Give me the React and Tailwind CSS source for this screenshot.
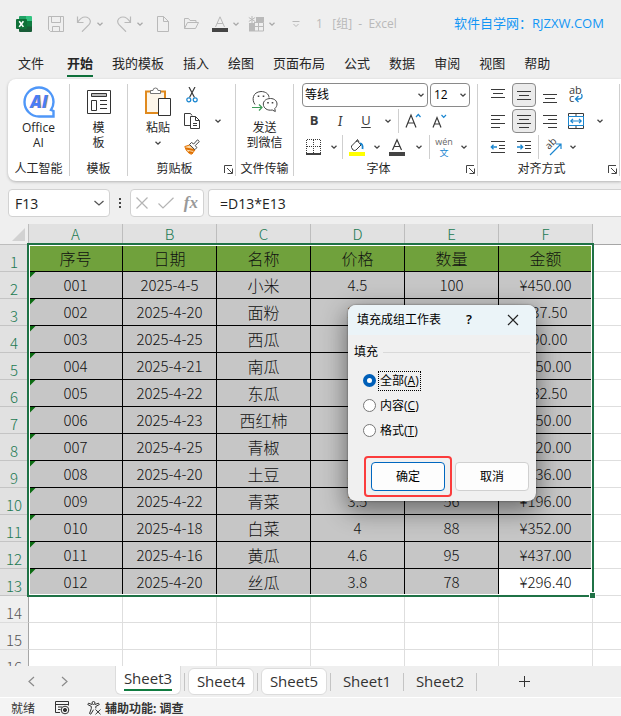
import React, { useState } from 'react';

const menuTabs = ['开始', '我的模板', '插入', '绘图', '页面布局', '公式', '数据', '审阅', '视图', '帮助'];

const columns = ['A', 'B', 'C', 'D', 'E', 'F'];

const headers = ['序号', '日期', '名称', '价格', '数量', '金额'];

const rows = [
  ['001', '2025-4-5', '小米', '4.5', '100', '¥450.00'],
  ['002', '2025-4-20', '面粉', '2.5', '15', '¥37.50'],
  ['003', '2025-4-25', '西瓜', '3', '30', '¥90.00'],
  ['004', '2025-4-21', '南瓜', '5', '50', '¥250.00'],
  ['005', '2025-4-22', '东瓜', '1.5', '55', '¥82.50'],
  ['006', '2025-4-23', '西红柿', '5', '70', '¥350.00'],
  ['007', '2025-4-25', '青椒', '4', '80', '¥320.00'],
  ['008', '2025-4-20', '土豆', '3.2', '105', '¥336.00'],
  ['009', '2025-4-22', '青菜', '3.5', '56', '¥196.00'],
  ['010', '2025-4-18', '白菜', '4', '88', '¥352.00'],
  ['011', '2025-4-16', '黄瓜', '4.6', '95', '¥437.00'],
  ['012', '2025-4-20', '丝瓜', '3.8', '78', '¥296.40'],
];

const emptyRows = [14, 15, 16];

const fillOptions = [
  { id: 'all', label: '全部', key: 'A' },
  { id: 'content', label: '内容', key: 'C' },
  { id: 'format', label: '格式', key: 'T' },
];

const Chevron = ({ className = 'text-[#444]' }) => (
  <svg width="8" height="8" viewBox="0 0 8 8" fill="none" stroke="currentColor" strokeWidth="1.3" className={`shrink-0 ${className}`}>
    <path d="M1.5 2.8 4 5.2l2.5-2.4" />
  </svg>
);

const Launcher = () => (
  <button aria-label="更多选项" className="w-[14px] h-4 flex items-center justify-center text-[#444]">
    <svg width="9" height="9" viewBox="0 0 9 9" fill="none" stroke="currentColor">
      <path d="M.5 8V.5H8M3 3l5 5M8.5 3.5v5h-5" />
    </svg>
  </button>
);

const Divider = () => <div className="w-px shrink-0 my-[5px] bg-[#cfcfcf]" />;

const RowDivider = () => <div className="w-px h-6 shrink-0 bg-[#cfcfcf]" />;

const Tool = ({ label, active, children }) => (
  <button
    aria-label={label}
    className={`w-6 h-6 shrink-0 flex items-center justify-center text-[#3a3a3a] ${active ? 'rounded border border-[#8a8a8a] bg-[#ebebeb]' : ''}`}
  >
    {children}
  </button>
);

const Drop = ({ label, className = 'w-5' }) => (
  <button aria-label={label} className={`h-6 shrink-0 flex items-center justify-center ${className}`}>
    <Chevron />
  </button>
);

const Lines = ({ d }) => (
  <svg width="16" height="18" viewBox="0 0 16 18" fill="none" stroke="currentColor">
    <path d={d} />
  </svg>
);

const Group = ({ label, launcher, className, children }) => (
  <section className={`shrink-0 flex flex-col pt-1 pb-1 ${className}`}>
    <div className="h-[76px]">{children}</div>
    <div className="mt-[2px] h-4 flex items-center">
      <span className="flex-1 text-center leading-4 whitespace-nowrap">{label}</span>
      {launcher && <Launcher />}
    </div>
  </section>
);

const TitleBar = () => (
  <header className="h-[47px] shrink-0 pl-4 flex items-center gap-3 text-[#b9b9b9]">
    <div className="w-5">
      <svg width="16" height="16" viewBox="0 0 16 16">
        <path d="M4 0h6v5H3V1a1 1 0 0 1 1-1z" fill="#21a366" />
        <path d="M10 0h5a1 1 0 0 1 1 1v4h-6z" fill="#33c481" />
        <path d="M3 5h7v6H3z" fill="#107c41" />
        <path d="M10 5h6v6h-6z" fill="#107c41" />
        <path d="M3 10.5h13V15a1 1 0 0 1-1 1H4a1 1 0 0 1-1-1z" fill="#185c37" />
        <rect y="3" width="11" height="10" rx="1" fill="#0f7038" />
        <path d="m3.2 5.2 4.2 5.7M7.400 5.200l-4.200 5.700" stroke="#fff" strokeWidth="1.6" />
      </svg>
    </div>
    <button aria-label="保存">
      <svg width="16" height="16" viewBox="0 0 16 16" fill="none" stroke="currentColor">
        <path d="M.5.5h15v15h-13l-2-2zM3.500.5v6h9v-6M4.500 15.500v-5h7v5" />
      </svg>
    </button>
    <div className="flex items-center gap-1">
      <button aria-label="撤消">
        <svg width="16" height="16" viewBox="0 0 16 16" fill="none" stroke="currentColor" strokeWidth="1.2">
          <path d="M1.500.5v6h6M1.500 6.500C4 2.500 7.500.2 11 1.300c3.500 1.200 4.300 4.800 2 7.400L6 15.700" />
        </svg>
      </button>
      <Chevron className="text-[#a8a8a8]" />
    </div>
    <div className="flex items-center gap-1">
      <button aria-label="恢复">
        <svg width="16" height="16" viewBox="0 0 16 16" fill="none" stroke="currentColor" strokeWidth="1.2">
          <path d="M14.500.5v6h-6M14.500 6.500C12 2.500 8.500.2 5 1.300 1.500 2.500.7 6.100 3 8.700l7 7" />
        </svg>
      </button>
      <Chevron className="text-[#a8a8a8]" />
    </div>
    <button aria-label="新建">
      <svg width="14" height="16" viewBox="0 0 14 16" fill="none" stroke="currentColor">
        <path d="M1.500.5h6l5 5v10h-11zM7.500.5v5h5" />
      </svg>
    </button>
    <button aria-label="打开">
      <svg width="18" height="16" viewBox="0 0 18 16" fill="none" stroke="currentColor">
        <path d="M2.500 12.500v-10h4l1.500 2h6v2M2.500 12.500l3-6h11l-3 6z" />
      </svg>
    </button>
    <div className="flex items-center gap-2">
      <div className="flex items-center gap-1">
        <button aria-label="字体颜色">
          <svg width="16" height="16" viewBox="0 0 16 16" fill="none" stroke="currentColor">
            <path d="M3.500 11 8 .8 12.500 11M5 7.500h6" />
            <path d="M0 14h16" stroke="#444" strokeWidth="4" />
          </svg>
        </button>
        <Chevron className="text-[#a8a8a8]" />
      </div>
      <div className="flex items-center gap-1">
        <button aria-label="套用格式">
          <svg width="16" height="16" viewBox="0 0 16 16" fill="none" stroke="currentColor">
            <path d="M4 0v7M.8 1.500l6.400 4M7.200 1.500.8 5.500" />
            <path d="M8 1h8v5H8zM1 7h5v8H1z" fill="currentColor" stroke="none" />
            <path d="M6 6.500h9.500v8.500H1M10.500 6.500V15M1 10.500h14.500M6.500 6.500V15" />
          </svg>
        </button>
        <Chevron className="text-[#a8a8a8]" />
      </div>
    </div>
    <button aria-label="自定义" className="w-4 flex justify-center">
      <svg width="8" height="8" viewBox="0 0 8 8" fill="none" stroke="currentColor">
        <path d="M.5 1.500h7M1.500 4 4 6.500 6.500 4" />
      </svg>
    </button>
    <span className="w-[126px] shrink-0 text-[12px] whitespace-pre">{'1   [组]  -  Excel'}</span>
    <a href="#" className="text-[13px] text-[#1296f5] whitespace-nowrap">软件自学网：RJZXW.COM</a>
  </header>
);

const MenuBar = () => (
  <nav className="h-8 shrink-0 pl-[18px] flex gap-[19px] text-[13px] leading-[20px] pt-[6px] text-[#262626] whitespace-nowrap">
    <button className="mr-1 h-6 flex">文件</button>
    {menuTabs.map((tab) => (
      <button
        key={tab}
        className={`h-6 flex ${tab === '开始' ? 'font-bold border-b-2 border-[#0f703b]' : ''}`}
      >
        {tab}
      </button>
    ))}
  </nav>
);

const BigButton = ({ icon, lines }) => (
  <button className="w-full flex flex-col items-center leading-[15px]">
    <span className="h-[37px] flex items-center">{icon}</span>
    {lines.map((line, i) => (
      <span key={i} className="h-[15px] flex items-center">{line}</span>
    ))}
  </button>
);

const FontGroup = () => (
  <Group label="字体" launcher className="w-[183px]">
    <div className="pl-2 flex flex-col gap-[2px]">
      <div className="flex gap-[2px]">
        <div className="relative w-[126px]">
          <select aria-label="字体" className="appearance-none w-full h-6 pl-[2px] rounded border border-[#8a8a8a] bg-white text-black">
            <option>等线</option>
          </select>
          <span className="absolute right-[3px] top-2 pointer-events-none"><Chevron /></span>
        </div>
        <div className="relative w-10">
          <select aria-label="字号" className="appearance-none w-full h-6 pl-[3px] rounded border border-[#8a8a8a] bg-white text-black">
            <option>12</option>
          </select>
          <span className="absolute right-[3px] top-2 pointer-events-none"><Chevron /></span>
        </div>
      </div>
      <div className="flex gap-[2px] items-center">
        <Tool label="加粗"><b className="text-[13px]">B</b></Tool>
        <Tool label="倾斜"><i className="text-[14px] font-serif">I</i></Tool>
        <Tool label="下划线"><u className="text-[13px] underline-offset-2">U</u></Tool>
        <Drop label="下划线样式" className="w-4" />
        <RowDivider />
        <Tool label="增大字号">
          <svg width="18" height="16" viewBox="0 0 18 16" fill="none" stroke="currentColor" strokeWidth="1.2">
            <path d="M2 14.500 7 2l5 12.500M4 10h6" />
            <path d="m12 4 2.300-2.500L16.500 4" stroke="#1a86d0" />
          </svg>
        </Tool>
        <Tool label="减小字号">
          <svg width="18" height="16" viewBox="0 0 18 16" fill="none" stroke="currentColor" strokeWidth="1.2">
            <path d="M3 14.500 7 4.500l4 10M4.500 11h5" />
            <path d="M11.500 2 13.700 4.300 16 2" stroke="#1a86d0" />
          </svg>
        </Tool>
      </div>
      <div className="flex gap-[2px] items-center">
        <Tool label="边框">
          <svg width="16" height="16" viewBox="0 0 16 16" fill="none" stroke="currentColor">
            <path d="M.5 14V.5h14V14M7.500 1v13M1 7.500h13" strokeDasharray="1 1" />
            <path d="M0 15h15" stroke="#000" strokeWidth="1.5" />
          </svg>
        </Tool>
        <Drop label="边框样式" className="w-3" />
        <RowDivider />
        <Tool label="填充颜色">
          <svg width="18" height="18" viewBox="0 0 18 18" fill="none" stroke="currentColor">
            <path d="M3.500 8 9 2.500l4 4.500-5 5c-1 .7-2 .5-3 0L3.500 9.500zM8 4l1.500-2.500L11 4" />
            <path d="M12 5.500c2 0 3 2 2.500 5.500" stroke="#1a86d0" strokeWidth="1.8" />
            <path d="M1 16h16" stroke="#ff0" strokeWidth="4" />
          </svg>
        </Tool>
        <Drop label="填充颜色列表" className="w-3" />
        <Tool label="字体颜色">
          <svg width="18" height="18" viewBox="0 0 18 18" fill="none" stroke="currentColor" strokeWidth="1.2">
            <path d="M4.500 12 9 1.800 13.500 12M6 8.500h6" />
            <path d="M1 16h16" stroke="#444" strokeWidth="4" />
          </svg>
        </Tool>
        <Drop label="字体颜色列表" className="w-4" />
        <RowDivider />
        <button aria-label="拼音" className="w-6 h-6 flex flex-col items-center justify-center text-[9px] leading-[11px] text-[#666]">
          <span>wén</span>
          <span className="text-[#1a86d0]">文</span>
        </button>
        <Drop label="拼音选项" className="w-3" />
      </div>
    </div>
  </Group>
);

const AlignGroup = () => (
  <Group label="对齐方式" launcher className="w-[141px]">
    <div className="pl-2 flex flex-col gap-[2px]">
      <div className="flex gap-[2px]">
        <Tool label="顶端对齐"><Lines d="M1 3.500h14M3 7.500h10M1 11.500h14" /></Tool>
        <Tool label="垂直居中" active><Lines d="M1 5.500h14M3 9.500h10M1 13.500h14" /></Tool>
        <Tool label="底端对齐"><Lines d="M1 8.500h14M3 12.500h10M1 16.500h14" /></Tool>
        <Tool label="自动换行">
          <svg width="16" height="18" viewBox="0 0 16 18" fill="none">
            <text x="1" y="8" fontSize="11" fill="#3a3a3a">ab</text>
            <text x="1" y="16" fontSize="11" fill="#3a3a3a">c</text>
            <path d="M13.500 8c1.500 3 0 5-2.500 5H8M10.500 10 7.500 13l3 3" stroke="#1a86d0" strokeWidth="1.3" />
          </svg>
        </Tool>
      </div>
      <div className="flex gap-[2px]">
        <Tool label="左对齐"><Lines d="M1 3.500h14M1 7.500h9M1 11.500h14M1 15.500h9" /></Tool>
        <Tool label="居中" active><Lines d="M1 3.500h14M3 7.500h10M1 11.500h14M3 15.500h10" /></Tool>
        <Tool label="右对齐"><Lines d="M1 3.500h14M6 7.500h9M1 11.500h14M6 15.500h9" /></Tool>
        <Tool label="合并后居中">
          <svg width="16" height="16" viewBox="0 0 16 16" fill="none" stroke="currentColor">
            <path d="M.5.5h15v15H.5zM8 .5v3M8 12.500v3" />
            <path d="M.5 3.500h15v9H.5z" fill="#fff" stroke="#1a86d0" />
            <path d="M3 8h10M5 5.800 2.800 8 5 10.200M11 5.800 13.200 8 11 10.200" stroke="#1a86d0" strokeWidth="1.2" />
          </svg>
        </Tool>
        <Drop label="合并选项" />
      </div>
      <div className="flex gap-[2px]">
        <Tool label="减少缩进">
          <svg width="16" height="14" viewBox="0 0 16 14" fill="none" stroke="currentColor">
            <path d="M1 1.500h14M9 5.500h6M9 8.500h6M1 12.500h14" />
            <path d="M7 7H1.500M3.500 4.800 1.300 7l2.200 2.200" stroke="#1a86d0" strokeWidth="1.3" />
          </svg>
        </Tool>
        <Tool label="增加缩进">
          <svg width="16" height="14" viewBox="0 0 16 14" fill="none" stroke="currentColor">
            <path d="M1 1.500h14M9 5.500h6M9 8.500h6M1 12.500h14" />
            <path d="M1 7h5.500M4.500 4.800 6.700 7 4.500 9.200" stroke="#1a86d0" strokeWidth="1.3" />
          </svg>
        </Tool>
        <RowDivider />
        <Tool label="方向">
          <svg width="18" height="18" viewBox="0 0 18 18" fill="none">
            <text transform="translate(5 12) rotate(-45)" fontSize="10" fill="#3a3a3a">ab</text>
            <path d="m6 17 10.500-10.500M12 6h5v5" stroke="#1a86d0" strokeWidth="1.2" />
          </svg>
        </Tool>
        <Drop label="方向选项" className="w-3" />
      </div>
    </div>
  </Group>
);

const BigPaste = () => (
  <button className="w-9 flex flex-col items-center leading-[15px]">
    <span className="h-[37px] flex items-center">
      <svg width="28" height="30" viewBox="0 0 28 30" fill="none">
        <path d="M2 4.500h19V26H2z" fill="#fdf6ea" stroke="#e08a1e" strokeWidth="2" />
        <path d="M6.500 6.500v-3H9a2.500 2.500 0 0 1 5 0h2.500v3z" fill="#fff" stroke="#777" />
        <path d="M14.500 11.500h12v17h-12z" fill="#fff" stroke="#333" />
      </svg>
    </span>
    <span>粘贴</span>
    <span className="h-[15px] flex items-center"><Chevron /></span>
  </button>
);

const Ribbon = () => (
  <div className="ml-2 h-[102px] shrink-0 flex overflow-hidden rounded-l-lg bg-white text-[12px] text-[#262626] shadow-[0_1px_3px_rgba(0,0,0,0.25)]">
    <Group label="人工智能" className="w-[61px]">
      <BigButton
        lines={['Office', 'AI']}
        icon={
          <svg width="32" height="32" viewBox="0 0 32 32">
            <path d="M30.500 30.500H16A14.500 14.500 0 1 1 30.500 16c0 3-.9 5.500-2.500 8l2.500 1z" fill="#fff" stroke="#4f97f8" strokeWidth="2.4" />
            <text x="17" y="22" textAnchor="middle" fontSize="17" fontWeight="800" fontStyle="italic" fill="#f5b98a">AI</text>
            <text x="16" y="21.5" textAnchor="middle" fontSize="17" fontWeight="800" fontStyle="italic" fill="#4a7df5">AI</text>
          </svg>
        }
      />
    </Group>
    <Divider />
    <Group label="模板" className="w-[57px]">
      <BigButton
        lines={['模', '板']}
        icon={
          <svg width="24" height="24" viewBox="0 0 24 24" fill="none" stroke="#333">
            <path d="M.5.5h23v23H.5z" />
            <path d="M4.500 3.500h15v3h-15z" fill="#bbb" />
            <path d="M4.500 10.500h5v10h-5zM13 10.500h7M13 14.500h7M13 18.500h7" />
          </svg>
        }
      />
    </Group>
    <Divider />
    <Group label="剪贴板" launcher className="w-[107px]">
      <div className="pl-3 flex">
        <BigPaste />
        <div className="w-8 flex flex-col items-center gap-[2px]">
          <Tool label="剪切">
            <svg width="14" height="16" viewBox="0 0 14 16" fill="none" stroke="currentColor" strokeWidth="1.2">
              <path d="m4 0 5.500 10.500M10 0 4.500 10.500" />
              <circle cx="3.8" cy="12.8" r="2" stroke="#1a86d0" />
              <circle cx="10.2" cy="12.8" r="2" stroke="#1a86d0" />
            </svg>
          </Tool>
          <Tool label="复制">
            <svg width="17" height="17" viewBox="0 0 17 17" fill="none" stroke="currentColor">
              <path d="M6 12.500H.5V.5h6l1.500 2" />
              <path d="M6.500 3.500h5l4 4v8h-9zM11.500 3.500v4h4M9 10.500h4M9 12.500h4" fill="#fff" />
            </svg>
          </Tool>
          <Tool label="格式刷">
            <svg width="16" height="16" viewBox="0 0 16 16" fill="none">
              <path d="m.8 7.500 5-1.500 5.200 5-3.500 4.300c-3-.8-5.700-3.800-6.700-7.800z" fill="#fbd9a8" stroke="#e07000" />
              <path d="m2 9.500 8 1.500M4.500 13l4.500 1" stroke="#e07000" strokeWidth="1.8" />
              <path d="m5.500 5.500 2-2 2.200 1.500L13.500.8l1.800 1.700-4 4 1.500 2.200-2 2z" fill="#fff" stroke="#444" />
            </svg>
          </Tool>
        </div>
        <div className="pt-[26px]"><Drop label="复制选项" /></div>
      </div>
    </Group>
    <Divider />
    <Group label="文件传输" className="w-[57px]">
      <BigButton
        lines={['发送', '到微信']}
        icon={
          <svg width="26" height="24" viewBox="0 0 26 24" fill="none" stroke="#444">
            <path d="M3 14.500C-.5 10 .5 2 9 1.500c4.500 0 8 2.500 8 6" />
            <path d="M18.500 8.500c4 0 6.500 2.500 6.500 5.500 0 2-1 3.500-2.200 4.500l.5 3-3-1.500c-5 1-9-2-9-6 0-3 3-5.500 7.200-5.500z" />
            <path d="M6.500 5.500v1.500M11.500 5.500v1.500M16 12v1.500M20.500 12v1.500" strokeWidth="1.6" />
            <path d="M0 17.500h10M7 14.500l3 3-3 3" stroke="#3d9a57" strokeWidth="1.2" />
          </svg>
        }
      />
    </Group>
    <Divider />
    <FontGroup />
    <Divider />
    <AlignGroup />
    <Divider />
  </div>
);

const FormulaBar = () => (
  <div className="mt-2 mb-[7px] ml-2 h-7 shrink-0 flex text-[14px] text-[#222]">
    <div className="w-[102px] shrink-0 flex items-center rounded border border-[#d2d2d2] bg-white pr-1">
      <input aria-label="名称框" defaultValue="F13" className="min-w-0 flex-1 h-full pl-[6px] bg-transparent outline-none" />
      <svg width="12" height="12" viewBox="0 0 12 12" fill="none" stroke="#555" strokeWidth="1.3">
        <path d="m1.500 4 4.500 4 4.500-4" />
      </svg>
    </div>
    <div className="w-5 shrink-0 flex flex-col items-center justify-center gap-[2px]">
      <i className="w-[2px] h-[2px] bg-[#444]" />
      <i className="w-[2px] h-[2px] bg-[#444]" />
      <i className="w-[2px] h-[2px] bg-[#444]" />
    </div>
    <div className="w-[74px] shrink-0 flex items-center justify-around rounded border border-[#d2d2d2] bg-white text-[#b4b4b4]">
      <button aria-label="取消输入">
        <svg width="12" height="12" viewBox="0 0 12 12" fill="none" stroke="currentColor" strokeWidth="1.2">
          <path d="m.5.5 11 11M11.500.5l-11 11" />
        </svg>
      </button>
      <button aria-label="输入">
        <svg width="16" height="12" viewBox="0 0 16 12" fill="none" stroke="currentColor" strokeWidth="1.2">
          <path d="m.5 6.500 4.500 4.500L15.500.8" />
        </svg>
      </button>
      <button aria-label="插入函数" className="font-['Liberation_Serif',serif] font-bold italic text-[17px] leading-5 text-[#999]">fx</button>
    </div>
    <input
      aria-label="编辑栏"
      defaultValue="=D13*E13"
      className="ml-1 min-w-0 flex-1 pl-[11px] rounded-l border border-r-0 border-[#d2d2d2] bg-white outline-none"
    />
  </div>
);

const RowHeader = ({ n, selected }) => (
  <th
    scope="row"
    className={`h-[27px] p-0 pt-[7px] border-b border-r text-[15px] leading-[19px] font-light ${
      selected ? 'bg-[#e1e1e1] text-[#217a52] border-b-[#c4c4c4] border-r-[#c4c4c4]' : 'bg-[#efefef] text-[#555] border-b-[#dcdcdc] border-r-[#a6a6a6]'
    }`}
  >
    {n}
  </th>
);

const Sheet = () => (
  <div className="flex-1 min-h-0 overflow-hidden bg-white">
    <div className="relative">
      <table className="w-full table-fixed border-separate border-spacing-0 text-center font-light text-[#111] font-['Noto_Sans_CJK_SC',sans-serif]">
        <colgroup>
          <col className="w-[29px]" />
          {columns.map((c) => (
            <col key={c} className="w-[94px]" />
          ))}
          <col />
        </colgroup>
        <thead>
          <tr>
            <td className="h-[21px] p-0 bg-[#efefef] border-r border-b border-[#bdbdbd]">
              <svg width="13" height="13" viewBox="0 0 13 13" className="ml-3">
                <path d="M13 0v13H0z" fill="#d2d2d2" />
              </svg>
            </td>
            {columns.map((c) => (
              <th key={c} className="h-[21px] p-0 bg-[#e1e1e1] border-r border-b border-[#bdbdbd] text-[15px] leading-5 font-light text-[#217a52]">
                {c}
              </th>
            ))}
            <th className="p-0 bg-[#efefef] border-b border-[#a6a6a6]" />
          </tr>
        </thead>
        <tbody>
          <tr>
            <RowHeader n={1} selected />
            {headers.map((h) => (
              <td key={h} className="h-[27px] p-0 bg-[#70a13c] border-r border-b border-black text-[16px] leading-[26px]">{h}</td>
            ))}
            <td className="border-b border-[#dedede]" />
          </tr>
          {rows.map((row, r) => (
            <tr key={row[0]}>
              <RowHeader n={r + 2} selected />
              {row.map((cell, c) => (
                <td
                  key={c}
                  className={`relative h-[27px] p-0 border-r border-b border-black leading-[26px] ${c === 2 ? 'text-[16px]' : 'text-[15px]'} ${
                    r === rows.length - 1 && c === 5 ? 'bg-white' : 'bg-[#c6c6c6]'
                  }`}
                >
                  {c === 0 && (
                    <svg width="6" height="6" viewBox="0 0 6 6" className="absolute left-px top-0">
                      <path d="M0 0h5.500L0 5.500z" fill="#0b6b12" />
                    </svg>
                  )}
                  {cell}
                </td>
              ))}
              <td className="border-b border-[#dedede]" />
            </tr>
          ))}
          {emptyRows.map((n) => (
            <tr key={n}>
              <RowHeader n={n} />
              {columns.map((c) => (
                <td key={c} className="h-[27px] p-0 border-r border-b border-[#dedede]" />
              ))}
              <td className="border-b border-[#dedede]" />
            </tr>
          ))}
        </tbody>
      </table>
      {/* selection frame A1:F13 */}
      <div className="absolute left-[27px] top-[19px] w-[567px] h-[354px] border-2 border-[#1f7246] shadow-[inset_0_0_0_1px_#fff] pointer-events-none">
        <div className="absolute -right-[4px] -bottom-[4px] w-[7px] h-[7px] border border-white bg-[#1f7246]" />
      </div>
    </div>
  </div>
);

const SheetTabs = () => (
  <div className="h-8 shrink-0 flex border-b border-white text-[15px] text-[#333]">
    <div className="w-28 shrink-0 pl-[26px] flex items-center gap-[22px] text-[#8a8a8a]">
      <button aria-label="上一张">
        <svg width="11" height="11" viewBox="0 0 11 11" fill="none" stroke="currentColor" strokeWidth="1.2"><path d="M8 1 3 5.500 8 10" /></svg>
      </button>
      <button aria-label="下一张">
        <svg width="11" height="11" viewBox="0 0 11 11" fill="none" stroke="currentColor" strokeWidth="1.2"><path d="m3 1 5 4.500L3 10" /></svg>
      </button>
    </div>
    {['Sheet3', 'Sheet4', 'Sheet5', 'Sheet1', 'Sheet2'].map((name, i) => (
      <div key={name} className="w-[73px] shrink-0 flex items-center">
        {i === 0 && (
          <button className="mx-[3px] flex-1 h-[29px] self-start flex justify-center rounded-b-md bg-white border border-t-0 border-[#dcdcdc]">
            <span className="h-[25px] leading-[25px] border-b-2 border-[#107c41]">{name}</span>
          </button>
        )}
        {i > 0 && (
          <button className={`mx-[3px] flex-1 h-[27px] leading-[25px] ${i < 3 ? 'rounded-md bg-white border border-[#dcdcdc]' : ''}`}>
            {name}
          </button>
        )}
        <div className="w-px h-[18px] bg-[#c4c4c4]" />
      </div>
    ))}
    <button aria-label="新建工作表" className="w-[94px] flex items-center justify-center">
      <svg width="11" height="11" viewBox="0 0 11 11" stroke="#333"><path d="M5.500 0v11M0 5.500h11" /></svg>
    </button>
  </div>
);

const StatusBar = () => (
  <footer className="h-[18px] shrink-0 pt-[3px] pl-[11px] flex items-start bg-[#f4f4f4] text-[12px] leading-[15px] text-[#333] whitespace-nowrap">
    <span className="w-11">就绪</span>
    <svg width="15" height="14" viewBox="0 0 15 14" fill="none" stroke="currentColor" className="mr-[17px]">
      <path d="M5 11.500H.5v-11h13v4M.5 3.500h13M3 6h4M3 8.500h2.500" />
      <circle cx="10" cy="9" r="3.8" />
      <circle cx="10" cy="9" r="1.6" fill="currentColor" />
    </svg>
    <svg width="15" height="14" viewBox="0 0 15 14" fill="none" stroke="currentColor" className="mr-[3px]">
      <circle cx="6.5" cy="2" r="1.5" />
      <path d="M5 3.500 1.500 2.200.8 3.600l3.500 1.800v2.200L2.500 12.500l1.300.7 2.700-4.500M8 3.500l3.500-1.300.8 1.400-3.500 1.800v2M8.500 8.500l5 4.800M13.500 8.500l-5 4.800" />
    </svg>
    <span className="font-bold">辅助功能: 调查</span>
  </footer>
);

const FillDialog = () => {
  const [mode, setMode] = useState('all');

  return (
    <div role="dialog" aria-label="填充成组工作表" className="absolute left-[348px] top-[305px] w-[188px] rounded-lg bg-[#f0f0f0] text-[12px] text-black shadow-[0_8px_24px_2px_rgba(0,0,0,0.45),0_0_2px_rgba(0,0,0,0.5)]">
      <div className="h-[30px] pl-[9px] pr-[17px] flex items-center rounded-t-lg bg-[#ebf4f8]">
        <span className="flex-1">填充成组工作表</span>
        <button aria-label="帮助" className="w-5 mr-7 text-[13px] font-semibold">?</button>
        <button aria-label="关闭">
          <svg width="12" height="12" viewBox="0 0 12 12" stroke="#222" strokeWidth="1.2"><path d="m1 1 10 10M11 1 1 11" /></svg>
        </button>
      </div>
      <div role="radiogroup" aria-label="填充" className="pt-2 px-[6px]">
        <div className="h-[18px] flex items-center gap-[5px]">
          <span>填充</span>
          <div className="flex-1 h-px bg-[#d9d9d9]" />
        </div>
        <div className="pt-[7px] pl-[9px] flex flex-col">
          {fillOptions.map((o) => (
            <div key={o.id} className="h-[25px] flex items-center gap-[2px]">
              <input
                type="radio"
                id={o.id}
                name="fill"
                checked={mode === o.id}
                onChange={() => setMode(o.id)}
                className="appearance-none w-[13px] h-[13px] rounded-full border border-[#777] bg-white checked:border-4 checked:border-[#005fb8]"
              />
              <label htmlFor={o.id} className={`h-5 px-px leading-[18px] border border-dotted ${mode === o.id ? 'border-black' : 'border-transparent'}`}>
                {o.label}(<u>{o.key}</u>)
              </label>
            </div>
          ))}
        </div>
      </div>
      <div className="pt-[19px] pb-[10px] pr-[7px] flex justify-end gap-[10px]">
        <div className="relative">
          <button className="w-[74px] h-[29px] rounded border border-[#0067c0] bg-[#fdfdfd]">确定</button>
          <div className="absolute -inset-y-[6px] -inset-x-[7px] border-2 border-[#fb3c3c] rounded-sm pointer-events-none" />
        </div>
        <button className="w-[74px] h-[29px] rounded border border-[#d0d0d0] bg-[#fdfdfd]">取消</button>
      </div>
    </div>
  );
};

const App = () => {
  return (
    <div className="relative h-screen flex flex-col overflow-hidden bg-[#efefef] font-['Open_Sans','Noto_Sans_CJK_SC',sans-serif]">
      <TitleBar />
      <MenuBar />
      <Ribbon />
      <FormulaBar />
      <Sheet />
      <SheetTabs />
      <StatusBar />
      <FillDialog />
    </div>
  );
};

export default App;
